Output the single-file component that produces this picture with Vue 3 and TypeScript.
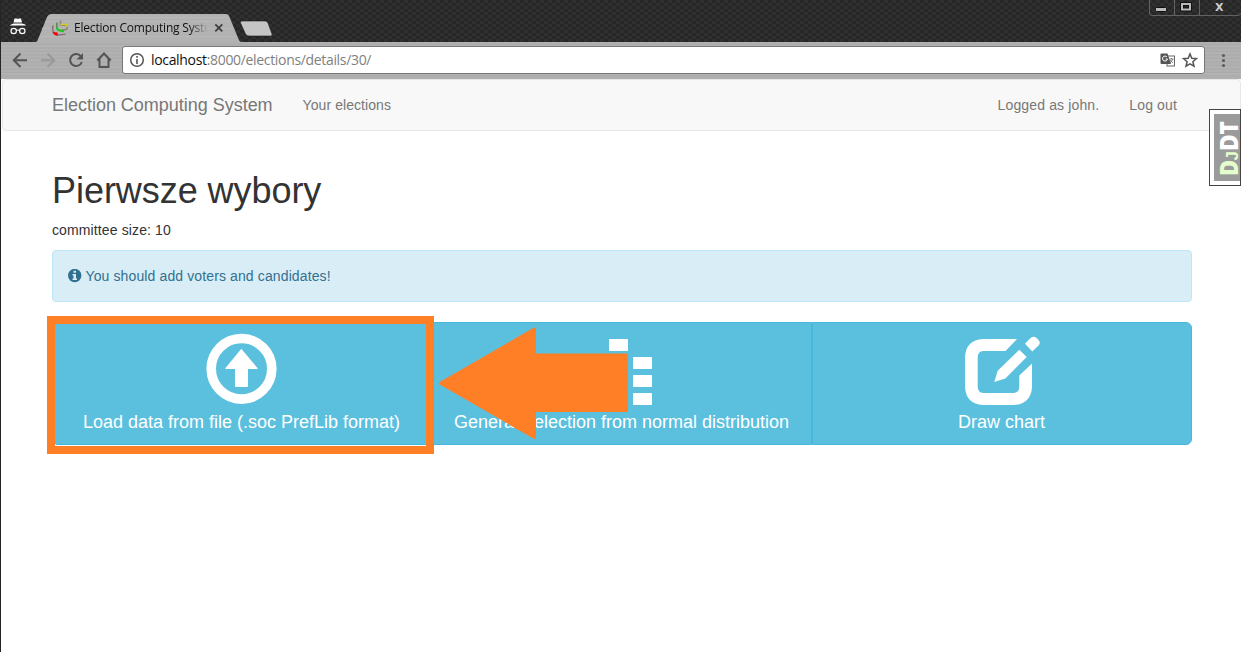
<script setup lang="ts">
interface NavItem { label: string }
const links: NavItem[] = [{ label: 'Your elections' }]
const account: NavItem[] = [{ label: 'Logged as john.' }, { label: 'Log out' }]
const actions = [
  { icon: 'upload', label: 'Load data from file (.soc PrefLib format)' },
  { icon: 'equalizer', label: 'Generate election from normal distribution' },
  { icon: 'edit', label: 'Draw chart' },
]
</script>

<template>
  <div class="window">
    <header class="tabstrip">
      <svg class="strip-art" width="300" height="42" viewBox="0 0 300 42">
        <g fill="#fff">
          <path d="M13.5 22.500 L14.500 18.500 H17 L18 19 L19 18.500 H21 L22 22.500 Z" />
          <path d="M9.500 25.500 Q12 24 13.500 23.500 H22 Q25 24 26.500 25.500 Z" />
        </g>
        <g fill="none" stroke="#fff" stroke-width="1.200">
          <circle cx="13.700" cy="31" r="2.700" /><circle cx="22.300" cy="31" r="2.700" />
          <path d="M16.400 30.500 Q18 29.500 19.600 30.500" />
        </g>
        <path d="M36 42 Q37.500 41 38.500 38 L47 17 Q48.500 14 51 14 H226 Q228.500 14 229.500 17 L238.500 39 Q239.500 42 241 42 Z" fill="#b2b2b2" />
        <g stroke="#b8b8b8" stroke-width="1"><path d="M47 17.500 H229 M45 21.500 H231 M42 28.500 H234 M40 36.500 H236" /></g>
        <path d="M242 21 H265 Q267 21 268 23 L272 34 Q272.500 36 270.500 36 H249 Q246.500 36 245.500 34 L240.500 23 Q240 21 242 21 Z" fill="#c5c5c5" stroke="#191919" stroke-width="0.600" />
        <g fill="none">
          <path d="M60.500 20.500 V25.500" stroke="#888" stroke-width="1.600" />
          <path d="M61 25.300 H67.300 V28.500 Q66 30.300 61.500 29.800" stroke="#8b8470" stroke-width="1.500" />
          <path d="M60.500 24.500 H67 V27" stroke="#d8d020" stroke-width="1.500" />
          <path d="M56.800 22.500 V28.500" stroke="#5b8b5b" stroke-width="1.600" />
          <path d="M56.800 27.500 Q57.500 31.200 64 31" stroke="#20c520" stroke-width="2" />
          <path d="M53 25.500 Q52 30 54 33 M58 35 L65.500 34.300" stroke="#8b7777" stroke-width="1.500" />
          <path d="M52.500 32 L57.500 32.500 L58 35.800 Q54 36 52.500 32 Z" fill="#f00000" />
          <path d="M215.300 24.300 L222.300 31.300 M222.300 24.300 L215.300 31.300" stroke="#3c3c3c" stroke-width="1.700" />
        </g>
      </svg>
      <span class="tab-title">Election Computing System</span>
      <svg class="controls" width="93" height="17" viewBox="0 0 93 17">
        <path d="M1.500 0 V13 Q1.500 15.500 4 15.500 H90 Q92.500 15.500 92.500 13 M26.500 0 V15 M51.500 0 V15" fill="none" stroke="#626262" />
        <rect x="7.500" y="7.500" width="11" height="4" rx="1" fill="#bbb" stroke="#111" />
        <rect x="34" y="4" width="8" height="5.500" fill="none" stroke="#111" stroke-width="4" />
        <rect x="34" y="4" width="8" height="5.500" fill="none" stroke="#bbb" stroke-width="2" />
        <text x="67" y="11" class="close">X</text>
      </svg>
    </header>

    <div class="toolbar">
      <svg class="nav-icons" width="120" height="37" viewBox="0 0 120 37">
        <g fill="none" stroke-width="2">
          <path d="M27 18.300 H14 M20.500 11.500 L13.800 18.300 L20.500 25" stroke="#545454" />
          <path d="M41 18.300 H54 M47.500 11.500 L54.200 18.300 L47.500 25" stroke="#999" />
          <path d="M81 14.500 A6 6 0 1 0 81.800 20" stroke="#545454" />
          <path d="M97.300 18.500 L104 11.500 L110.700 18.500 M99.500 17 V25 H108.500 V17" stroke="#545454" />
        </g>
        <path d="M83 11 V17.500 H76.500 Z" fill="#545454" />
      </svg>
      <div class="address">
        <svg width="28" height="26" viewBox="0 0 28 26">
          <circle cx="14" cy="13" r="6.300" fill="none" stroke="#555" stroke-width="1.500" />
          <path d="M14 12 V17 M14 9 V10.700" stroke="#555" stroke-width="1.600" />
        </svg>
        <span class="url"><b>localhost</b>:8000/elections/details/30/</span>
        <svg class="address-icons" width="45" height="26" viewBox="0 0 45 26">
          <rect x="8" y="9" width="7.500" height="10" fill="#fff" stroke="#666" />
          <path d="M2.500 6.500 H8.500 L12 17 H2.500 Q1.500 17 1.500 16 V7.500 Q1.500 6.500 2.500 6.500 Z" fill="#555" />
          <path d="M8 10 A2.500 2.500 0 1 0 8.500 12 H6.500" fill="none" stroke="#fff" />
          <path d="M10.500 12 H14.500 M12.500 11 V12 M11 16 L14 12 M11 13 L14 16" fill="none" stroke="#666" stroke-width=".8" />
          <path d="M31 7 L32.800 11.300 L37.400 11.700 L33.900 14.700 L35 19.200 L31 16.800 L27 19.200 L28.100 14.700 L24.600 11.700 L29.200 11.300 Z" fill="none" stroke="#555" stroke-width="1.500" />
        </svg>
      </div>
      <svg class="menu" width="36" height="37" viewBox="0 0 36 37">
        <g fill="#5c5c5c"><circle cx="18.500" cy="13.500" r="1.600" /><circle cx="18.500" cy="18.500" r="1.600" /><circle cx="18.500" cy="23.500" r="1.600" /></g>
      </svg>
    </div>

    <div class="page">
      <nav class="navbar">
        <span class="brand">Election Computing System</span>
        <span v-for="l in links" :key="l.label" class="link">{{ l.label }}</span>
        <span class="spacer"></span>
        <span v-for="l in account" :key="l.label" class="link account">{{ l.label }}</span>
      </nav>
      <main class="container">
        <h1>Pierwsze wybory</h1>
        <p>committee size: 10</p>
        <div class="alert">
          <svg width="14" height="14" viewBox="0 0 14 14">
            <circle cx="6.700" cy="6.500" r="6.700" fill="#31708f" />
            <path d="M5.500 1.800 H8 V3.800 H5.500 Z M4.500 5 H8 V9.500 H9 V11 H4.500 V9.500 H5.500 V6.500 H4.500 Z" fill="#d9edf7" />
          </svg>
          <span>You should add voters and candidates!</span>
        </div>
        <div class="group">
          <button v-for="a in actions" :key="a.icon" type="button">
            <svg width="80" height="80" viewBox="0 0 80 80" fill="#fff">
              <template v-if="a.icon === 'upload'">
                <circle cx="39.500" cy="39.800" r="30.300" fill="none" stroke="#fff" stroke-width="9.600" />
                <path d="M39.500 20 L55.700 39.300 Q56 40 55 40 H46 V57 Q46 58 45 58 H34 Q33 58 33 57 V40 H24 Q23 40 23.500 39 L38.500 20.700 Q39.500 19.500 40.500 20.700 Z" />
              </template>
              <template v-else-if="a.icon === 'equalizer'">
                <rect x="27" y="10" width="19" height="12" rx=".7" />
                <rect v-for="y in [28, 46, 64]" :key="y" x="51" :y="y" width="19" height="12" rx=".7" />
              </template>
              <template v-else>
                <path d="M55 10 H21 Q4 11 3 28 V58 Q4 75 21 76 H52 Q69 75 70 58 V34.500 L57.300 46.500 V58 Q57 63.500 52 64 H21 Q16 63.500 15.700 58 V28 Q16 22.500 21 22 H43.500 Z" />
                <path d="M57.300 20.700 L64.700 28 L43.300 49.500 L32.300 53 L35.700 41.700 Z" />
                <path d="M63 14.700 L68 9.500 Q71 6.500 74.500 9 L76.500 11 Q79 14 76.500 16.500 L70.300 22.500 Z" />
              </template>
            </svg>
            <span>{{ a.label }}</span>
          </button>
        </div>
      </main>
    </div>

    <div class="highlight"></div>
    <svg class="arrow" width="194" height="116" viewBox="0 0 194 116">
      <path d="M3.500 57.300 L97.500 3 V29 H189.500 V84.500 H97.500 V111.500 Z" />
    </svg>
    <div class="debug">
      <svg width="27" height="67" viewBox="0 0 27 67">
        <rect width="26" height="67" fill="#9b9b9b" />
        <g transform="translate(24 61) rotate(-90)">
          <text x="-1" y="0" font-size="24" fill="#e4ffcb" textLength="16" lengthAdjust="spacingAndGlyphs">D</text>
          <text x="14.500" y="0" font-size="17" fill="#e4ffcb" class="small-j">J</text>
          <text x="24" y="0" font-size="24" fill="#fff" textLength="30" lengthAdjust="spacingAndGlyphs">DT</text>
        </g>
      </svg>
    </div>
  </div>
</template>

<style>
body { margin: 0; background: #fff; overflow: hidden; }
</style>
<style scoped>
* { box-sizing: border-box; }
svg { display: block; flex: none; }
.window { position: relative; width: 1241px; height: 652px; overflow: hidden; display: flex; flex-direction: column; border-left: 1px solid #252525; font: 14px/20px "Liberation Sans", Arial, sans-serif; color: #333; background: #fff; }
.tabstrip { position: relative; height: 42px; flex: none; margin-left: -1px; background-color: #2b2b2b; background-image: conic-gradient(#303030 25%, #272727 0 50%, #303030 0 75%, #272727 0); background-size: 8px 6px; }
.tab-title { position: absolute; left: 74px; top: 18px; width: 134px; overflow: hidden; white-space: nowrap; font: 12px/20px "Open Sans", "Noto Sans", sans-serif; letter-spacing: -.2px; color: #111; -webkit-mask-image: linear-gradient(90deg, #000 86%, transparent); mask-image: linear-gradient(90deg, #000 86%, transparent); }
.controls { position: absolute; right: 0; top: 0; }
.close { font: bold 11px "DejaVu Sans", sans-serif; fill: #ccc; }
.toolbar { height: 37px; flex: none; display: flex; align-items: flex-start; background: repeating-linear-gradient(#b0b0b0 0 2px, #aaa 2px 3px, #b2b2b2 3px 5px, #adadad 5px 7px); }
.nav-icons { margin-left: -1px; }
.address { width: 1083px; height: 28px; margin: 4px 0 0 2px; display: flex; align-items: center; border: 1px solid #777; border-radius: 3px; background: #fff; }
.url { font: 14px/26px "Open Sans", "Noto Sans", sans-serif; letter-spacing: -.33px; color: #808080; }
.url b { font-weight: 400; color: #111; }
.address-icons { margin-left: auto; }
.page { flex: 1; padding-left: 1px; }
.navbar { height: 52px; display: flex; align-items: center; padding: 0 48px 0 34px; border: 1px solid #e7e7e7; border-radius: 4px; background: #f8f8f8; color: #777; }
.brand { padding: 0 15px; font-size: 18px; letter-spacing: -.02px; }
.link { padding: 0 15px; white-space: nowrap; letter-spacing: .07px; }
.account { letter-spacing: .14px; }
.spacer { flex: 1; }
.container { padding: 40px 49px 0 50px; }
h1 { margin: 0 0 10px; font-size: 36px; line-height: 39px; font-weight: 500; letter-spacing: -.05px; }
p { margin: 0 0 10px; letter-spacing: .12px; }
.alert { height: 52px; display: flex; align-items: center; gap: 4px; padding: 0 14.500px; border: 1px solid #bce8f1; border-radius: 4px; color: #31708f; background: #d9edf7; letter-spacing: .12px; }
.group { margin-top: 20px; display: grid; grid-template-columns: repeat(3, 1fr); }
button { height: 123px; margin: 0; padding: 6px 0 0; display: flex; flex-direction: column; align-items: center; gap: 1px; border: 1px solid #46b8da; background: #5bc0de; color: #fff; font: 18px/24px "Liberation Sans", Arial, sans-serif; white-space: nowrap; }
button span { margin-right: 1px; }
button:first-child { border-radius: 6px 0 0 6px; }
button:last-child { border-radius: 0 6px 6px 0; }
.highlight { position: absolute; left: 46px; top: 316px; width: 387px; height: 138px; border: 8px solid #ff7f27; }
.arrow { position: absolute; left: 436px; top: 326px; fill: #ff7f27; stroke: #ff7f27; stroke-width: 3; stroke-linejoin: round; }
.debug { position: absolute; left: 1208px; top: 109px; width: 32px; height: 77px; padding: 4px; border: 1px solid #444; background: #fff; }
.debug svg { overflow: visible; }
.debug text { font-family: "Open Sans", "DejaVu Sans", sans-serif; font-weight: 800; }
.debug .small-j { font-family: "Liberation Sans", sans-serif; }
</style>
